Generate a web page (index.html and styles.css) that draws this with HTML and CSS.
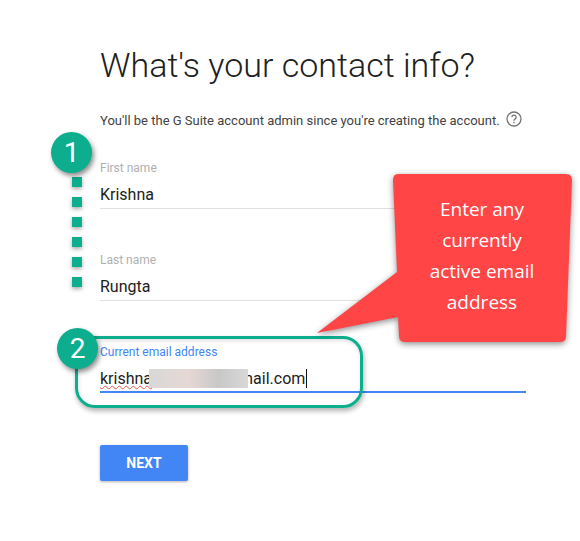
FILE: index.html
```html
<!DOCTYPE html>
<html lang="en">
<head>
  <meta charset="UTF-8">
  <title>G Suite - Contact info</title>
  <link rel="stylesheet" href="styles.css">
</head>
<body>
  <main class="form">
    <h1>What's your contact info?</h1>
    <p class="intro">
      You'll be the G Suite account admin since you're creating the account.
      <svg class="help" width="16" height="16" viewBox="0 0 16 16">
        <circle cx="8" cy="8" r="7" fill="none" stroke="#757575" stroke-width="1.3"/>
        <path d="M5.9 6.2a2.1 2.1 0 1 1 3.3 1.7c-.8.5-1.2.9-1.2 1.8" fill="none" stroke="#757575" stroke-width="1.3"/>
        <rect x="7.3" y="10.8" width="1.4" height="1.4" fill="#757575"/>
      </svg>
    </p>

    <div class="field">
      <label>First name</label>
      <div class="value">Krishna</div>
    </div>
    <div class="field">
      <label>Last name</label>
      <div class="value">Rungta</div>
    </div>
    <div class="field active">
      <label>Current email address</label>
      <div class="value"><span class="typo">krishna</span><span class="blur"></span>mail.com<span class="caret"></span></div>
    </div>

    <button class="next">NEXT</button>
  </main>

  <!-- Annotations drawn over the form -->
  <div class="dots">
    <i></i><i></i><i></i><i></i><i></i><i></i>
  </div>
  <div class="badge badge-one">1</div>
  <div class="highlight"></div>
  <div class="badge badge-two">2</div>

  <div class="callout">
    <svg width="580" height="541" viewBox="0 0 580 541">
      <path d="M398 174H566Q572 174 572 180L566 336Q566 342 560 342H405Q399 342 399 336L398 317L317 333L397 272L393 180Q393 174 398 174Z" fill="#ff4545"/>
    </svg>
    <p class="callout-text">Enter any<br>currently<br>active email<br>address</p>
  </div>
</body>
</html>
```

FILE: styles.css
```css
html, body {
  margin: 0;
  background: #fff;
}

body {
  position: relative;
  width: 580px;
  height: 541px;
  overflow: hidden;
  font-family: Roboto, "Liberation Sans", sans-serif;
  color: #212121;
}

.form {
  width: 426px;
  padding: 42px 0 0 100px;
}

h1 {
  margin: 0;
  font-size: 34px;
  line-height: 46px;
  font-weight: 300;
  color: #202020;
}

.intro {
  display: flex;
  align-items: center;
  gap: 6px;
  margin: 20px 0 0;
  height: 24px;
  font-size: 13px;
  color: #424242;
  white-space: nowrap;
}

.help {
  margin-top: -2px;
}

.field {
  height: 92px;
  box-sizing: border-box;
}

.field:first-of-type {
  margin-top: 24px;
}

.field label {
  display: block;
  padding-top: 4px;
  font-size: 12px;
  line-height: 16px;
  color: #b0b0b0;
}

.value {
  height: 28px;
  margin-top: 4px;
  border-bottom: 1px solid #e0e0e0;
  font-size: 16px;
  line-height: 30px;
  color: #212121;
  white-space: nowrap;
}

.active label {
  color: #4285f4;
}

.active .value {
  height: 27px;
  border-bottom: 2px solid #4285f4;
}

.typo {
  text-decoration: underline wavy #e5564e 1px;
}

.blur {
  position: relative;
  z-index: 1;
  display: inline-block;
  width: 99px;
  height: 19px;
  margin: 0 -9px 0 -3px;
  background: linear-gradient(90deg, #d8d8d8, #e6d8d4 40%, #c8c8c8 70%, #d8d8d8);
  vertical-align: -4px;
}

.caret {
  display: inline-block;
  width: 1px;
  height: 19px;
  margin-left: 1px;
  background: #111;
  vertical-align: -4px;
}

.next {
  display: block;
  width: 88px;
  height: 36px;
  margin-top: 13px;
  border: 0;
  border-radius: 2px;
  background: #4285f4;
  box-shadow: 0 1px 3px rgba(0,0,0,0.3);
  font-family: inherit;
  font-size: 14px;
  font-weight: 700;
  color: #fff;
}

/* Annotations */
.badge {
  position: absolute;
  width: 41px;
  height: 41px;
  border-radius: 50%;
  background: #0cae8e;
  box-shadow: 2px 3px 5px rgba(0,0,0,0.45);
  font-family: Roboto, sans-serif;
  font-size: 28px;
  line-height: 41px;
  text-align: center;
  color: #fff;
}

.badge-one {
  left: 51px;
  top: 132px;
}

.badge-two {
  left: 57px;
  top: 328px;
}

.dots {
  position: absolute;
  left: 72px;
  top: 177px;
  display: flex;
  flex-direction: column;
  gap: 10px;
}

.dots i {
  display: block;
  width: 10px;
  height: 10px;
  background: #0cae8e;
  box-shadow: 0 2px 4px rgba(0,0,0,0.35);
}

.highlight {
  position: absolute;
  left: 75px;
  top: 336px;
  width: 282px;
  height: 66px;
  border: 3px solid #0cae8e;
  border-radius: 20px;
  box-shadow: 1px 3px 5px rgba(0,0,0,0.3), inset 1px 2px 4px rgba(0,0,0,0.12);
}

.callout svg {
  position: absolute;
  left: 0;
  top: 0;
  filter: drop-shadow(0 2px 3px rgba(0,0,0,0.45));
}

.callout-text {
  position: absolute;
  left: 400px;
  top: 194px;
  width: 164px;
  margin: 0;
  font-family: "Open Sans", sans-serif;
  font-size: 19px;
  line-height: 31px;
  text-align: center;
  color: #fff;
}
```
